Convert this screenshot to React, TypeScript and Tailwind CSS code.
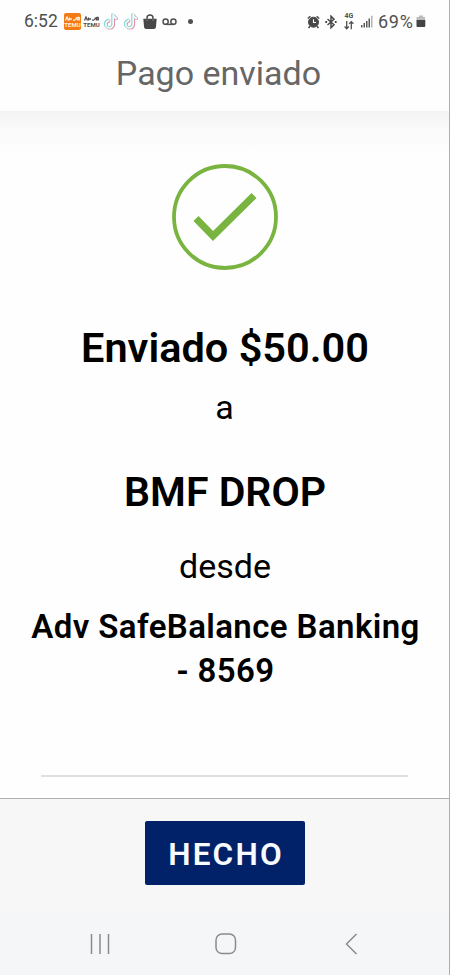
function TemuIcon({ filled }: { filled?: boolean }) {
  return (
    <span
      className={
        filled
          ? 'flex h-[17px] w-[17px] flex-col items-center justify-center rounded-[2px] bg-[#f47a16] text-[#fff0df]'
          : 'flex h-[17px] w-[17px] flex-col items-center justify-center text-[#505050]'
      }
    >
      <svg width="15" height="5" viewBox="0 0 15 5" fill="none" stroke="currentColor" strokeWidth="1.3">
        <path d="M.5 4.5 2 1l1.5 3.5M4.5 4.5v-3M5 3h2M8 4.2h2.2M10.5 4l1-2.5M12.5 1v3.5M14.3 1v3.5M12.5 1.5h2M12.5 3.5h2" />
      </svg>
      <span className="mt-px text-[6px] leading-[6px] font-bold">TEMU</span>
    </span>
  );
}

function NoteIcon() {
  const note = 'M10 1v10.2a3.7 3.7 0 1 1-3.6-3.7M10 1.4c.4 2.5 1.8 3.7 4 3.9';
  return (
    <svg width="16" height="18" viewBox="0 0 16 18" fill="none">
      <path d={note} stroke="#e58aa3" strokeWidth="2.6" transform="translate(.8 .4)" />
      <path d={note} stroke="#83dbdc" strokeWidth="2.6" transform="translate(-.5 -.4)" />
      <path d={note} stroke="#f8f8f8" strokeWidth="1.7" transform="translate(.2 0)" />
    </svg>
  );
}

function BagIcon() {
  return (
    <svg width="14" height="16" viewBox="0 0 14 16">
      <path d="M4 6V4a3 3 0 0 1 6 0v2" fill="none" stroke="#484848" strokeWidth="1.4" />
      <path d="M.3 4.7h13.4l-.8 8.5a2 2 0 0 1-2 1.8H3.1a2 2 0 0 1-2-1.8z" fill="#484848" />
      <path d="M4 5.5v1.2M10 5.5v1.2" stroke="#999" />
    </svg>
  );
}

function VoicemailIcon() {
  return (
    <svg width="15" height="8" viewBox="0 0 15 8" fill="none" stroke="#505050" strokeWidth="1.5">
      <circle cx="3.6" cy="3.7" r="2.6" />
      <circle cx="11.4" cy="3.7" r="2.6" />
      <path d="M3.6 6.4h7.8" />
    </svg>
  );
}

function AlarmIcon() {
  return (
    <svg width="13" height="14" viewBox="0 0 13 14" fill="none" stroke="#484848">
      <circle cx="6.5" cy="7.2" r="5" fill="#484848" />
      <path d="M.8 3.5 3.4 1.2M12.2 3.5 9.6 1.2M3 11.3l-1.5 1.8M10 11.3l1.5 1.8" strokeWidth="1.5" />
      <path d="M6.5 4.3v3.2h2.6" stroke="#fff" strokeWidth="1.1" />
    </svg>
  );
}

function BluetoothIcon() {
  return (
    <svg width="12" height="14" viewBox="0 0 12 14" fill="none" stroke="#484848" strokeWidth="1.5">
      <path d="M2.5 4 9 9.8 6 12.8V1.2l3 3L2.5 10" />
      <path d="M.3 7h1.8M9.8 7h1.8" strokeWidth="1.8" />
    </svg>
  );
}

function DataIcon() {
  return (
    <span className="flex h-[17px] w-[10px] flex-col items-center text-[#505050]">
      <span className="text-[7px] leading-[7px] font-bold">4G</span>
      <svg width="10" height="10" viewBox="0 0 10 10" fill="none" stroke="currentColor" strokeWidth="1.3">
        <path d="M2.7 1v7.5M.6 6.5l2.1 2.2 2.1-2.2M7.3 9.3V1.8M5.2 3.8l2.1-2.2 2.1 2.2" />
      </svg>
    </span>
  );
}

function SignalIcon() {
  return (
    <svg width="12" height="13" viewBox="0 0 12 13">
      <path d="M0 10h1.5v2.5H0zM2.5 8H4v4.5H2.5zM5 6h1.5v6.5H5zM7.5 3.5H9v9H7.5z" fill="#585858" />
      <path d="M10 .8h1.5v11.7H10z" fill="#b4b4b4" />
    </svg>
  );
}

function BatteryIcon() {
  return (
    <svg width="10" height="13" viewBox="0 0 10 13">
      <path d="M2.8.5h4.4V2H9v3.5H.5V2h2.3z" fill="#bdbdbd" />
      <path d="M.5 5h8.8v6a1 1 0 0 1-1 1H1.5a1 1 0 0 1-1-1z" fill="#444" />
    </svg>
  );
}

function StatusBar() {
  return (
    <div className="flex h-[43px] items-center justify-between pr-[23px] pl-[24px] text-[#505050]">
      <div className="flex items-center">
        <span className="w-[40px] text-[17.5px]">6:52</span>
        <TemuIcon filled />
        <span className="ml-[2px] flex"><TemuIcon /></span>
        <span className="ml-[3px] flex"><NoteIcon /></span>
        <span className="ml-[4px] flex"><NoteIcon /></span>
        <span className="ml-[4px] flex"><BagIcon /></span>
        <span className="ml-[5px] flex"><VoicemailIcon /></span>
        <span className="ml-[11px] h-[5px] w-[5px] rounded-full bg-[#505050]" />
      </div>
      <div className="flex items-center">
        <AlarmIcon />
        <span className="ml-[5px] flex"><BluetoothIcon /></span>
        <span className="ml-[7px] flex"><DataIcon /></span>
        <span className="ml-[7px] flex"><SignalIcon /></span>
        <span className="ml-[5px] w-[38px] text-[18px] tracking-[0.7px]">69%</span>
        <BatteryIcon />
      </div>
    </div>
  );
}

function NavigationBar() {
  return (
    <nav className="flex h-[64px] items-center bg-[#f5f6f8] pt-px pl-[89px] text-[#8b8b8d]">
      <svg width="22" height="22" viewBox="0 0 22 22" stroke="currentColor" strokeWidth="1.5">
        <path d="M2.5 1v20M11 1v20M19.5 1v20" />
      </svg>
      <svg className="ml-[104px]" width="22" height="22" viewBox="0 0 22 22" fill="none" stroke="currentColor" strokeWidth="1.5">
        <rect x="1" y="1" width="19.5" height="19.5" rx="6" />
      </svg>
      <svg className="ml-[108px]" width="13" height="22" viewBox="0 0 13 22" fill="none" stroke="currentColor" strokeWidth="1.5">
        <path d="M11.5 1 1.5 11l10 10" />
      </svg>
    </nav>
  );
}

export default function App() {
  return (
    <div className="flex h-[975px] w-[450px] flex-col border-r border-[#aeaeae] bg-[#fefefe] font-['Roboto',sans-serif] whitespace-nowrap">
      <header className="h-[111px] shrink-0">
        <StatusBar />
        <h1 className="pr-[12px] text-center text-[34px] leading-[61px] text-[#666]">Pago enviado</h1>
      </header>

      <main className="flex flex-1 flex-col items-center bg-[linear-gradient(to_bottom,#f3f3f3,#fafafa_18px,#fefefe_44px)] pt-[53px] text-black">
        <svg width="106" height="106" viewBox="0 0 106 106" fill="none" stroke="#7ab440">
          <circle cx="53" cy="53" r="51" strokeWidth="3.8" />
          <path d="M24 54.5 41 72 82 31.5" strokeWidth="7" />
        </svg>
        <p className="mt-[54px] pl-px text-[41.5px] leading-[48px] font-semibold">Enviado $50.00</p>
        <p className="mt-[15px] text-[34px] leading-[40px]">a</p>
        <p className="mt-[41px] pl-px text-[41px] leading-[48px] font-semibold">BMF DROP</p>
        <p className="mt-[30px] pl-px text-[34px] leading-[40px]">desde</p>
        <p className="mt-[19px] pl-[2px] text-center text-[33px] leading-[44px] font-semibold tracking-[0.4px]">
          Adv SafeBalance Banking
          <br />- 8569
        </p>
        <hr className="mt-[82px] w-[367px] border-t-2 border-[#e0e0e0]" />
      </main>

      <footer className="flex h-[113px] shrink-0 flex-col items-center border-t border-[#aeaeae] bg-[#f7f7f7] pt-[22px]">
        <button className="h-[64px] w-[160px] rounded-[2px] bg-[#012169] pt-[3px] pl-[3px] text-[31.5px] font-semibold tracking-[2.2px] text-[#f8fbff]">
          HECHO
        </button>
      </footer>
      <NavigationBar />
    </div>
  );
}
